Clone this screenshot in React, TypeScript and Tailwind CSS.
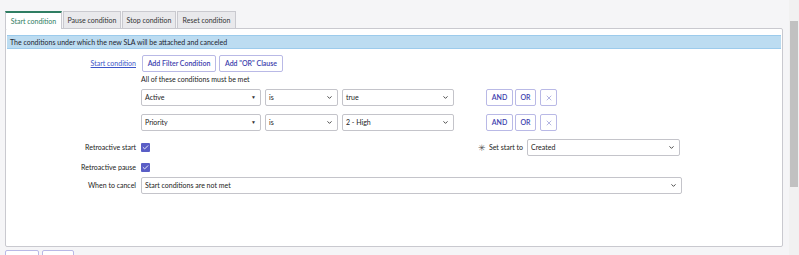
import { Check, ChevronDown, X } from "lucide-react";

const tabs = ["Start condition", "Pause condition", "Stop condition", "Reset condition"];
const tabWidths = ["w-[57px]", "w-[58px]", "w-[54px]", "w-[59px]"];

const Select = ({
  value,
  width,
  caret = false,
}: {
  value: string;
  width: string;
  caret?: boolean;
}) => (
  <div
    className={`${width} h-[17px] flex items-center justify-between border border-[#c4c4ca] rounded-[2px] bg-white pl-[3px] pr-[4px] text-[#222]`}
  >
    <span>{value}</span>
    {caret ? (
      <span className="text-[5px] leading-none text-[#333]">▼</span>
    ) : (
      <ChevronDown size={7} strokeWidth={3} color="#333" />
    )}
  </div>
);

const Btn = ({ children, width }: { children: React.ReactNode; width: string }) => (
  <div
    className={`${width} h-[17px] flex items-center justify-center border border-[#b9b9e6] rounded-[2px] bg-white text-[#3c40ad] font-semibold`}
  >
    {children}
  </div>
);

const ConditionRow = ({ field, value }: { field: string; value: string }) => (
  <div className="flex items-center ml-[134px]">
    <Select value={field} width="w-[120px]" caret />
    <div className="w-[4px]" />
    <Select value="is" width="w-[73px]" />
    <div className="w-[4px]" />
    <Select value={value} width="w-[112px]" />
    <div className="w-[32px]" />
    <Btn width="w-[27px]">AND</Btn>
    <div className="w-[2px]" />
    <Btn width="w-[21px]">OR</Btn>
    <div className="w-[4px]" />
    <div className="w-[17px] h-[17px] flex items-center justify-center border border-[#b9b9e6] rounded-[2px] bg-white">
      <X size={8} strokeWidth={1.5} color="#6a6ec4" />
    </div>
  </div>
);

const Checkbox = () => (
  <div className="w-[9px] h-[9px] bg-[#5a5ec6] rounded-[1px] flex items-center justify-center">
    <Check size={7} strokeWidth={3} color="white" />
  </div>
);

export default function App() {
  return (
    <div
      className="w-[799px] h-[255px] bg-[#f5f5f7] flex overflow-hidden text-[7px] text-[#222] whitespace-nowrap"
      style={{ fontFamily: "Lato, 'Open Sans', sans-serif" }}
    >
      <div className="flex-1 pl-[5px] pr-[6px] pt-[10px]">
        {/* Tabs */}
        <div className="flex items-end h-[18px]">
          {tabs.map((t, i) => (
            <div
              key={t}
              className={`${tabWidths[i]} flex items-center justify-center ${
                i === 0
                  ? "h-[18px] bg-white border-t-2 border-t-[#2f7d62] border-x border-x-[#c9c9cf] text-[#2f7d62] relative -mb-px"
                  : "h-[17px] bg-[#e9e9ec] border border-[#c9c9cf] border-b-0 ml-px text-[#333]"
              }`}
            >
              {t}
            </div>
          ))}
        </div>

        {/* Panel */}
        <div className="h-[219px] bg-white border border-[#c9c9cf] rounded-[2px] px-px pt-[6px]">
          <div className="h-[14px] bg-[#bcdcf1] border-y border-[#9ccbec] pl-[3px] flex items-center text-[#1d2530]">
            The conditions under which the new SLA will be attached and canceled
          </div>

          {/* Start condition row */}
          <div className="flex items-center mt-[6px] h-[17px]">
            <div className="w-[129px] flex justify-end">
              <span className="text-[#3d55c8] underline">Start condition</span>
            </div>
            <div className="w-[6px]" />
            <Btn width="w-[74px]">Add Filter Condition</Btn>
            <div className="w-[3px]" />
            <Btn width="w-[64px]">Add "OR" Clause</Btn>
          </div>

          <div className="ml-[134px] mt-[1px] h-[13px] flex items-center">
            All of these conditions must be met
          </div>

          <div className="mt-[3px]">
            <ConditionRow field="Active" value="true" />
          </div>
          <div className="mt-[8px]">
            <ConditionRow field="Priority" value="2 - High" />
          </div>

          {/* Retroactive start + Set start to */}
          <div className="flex items-center mt-[8px] h-[17px]">
            <div className="w-[129px] text-right">Retroactive start</div>
            <div className="w-[5px]" />
            <Checkbox />
            <div className="flex-1 flex justify-end items-center pr-[101px]">
              <span className="text-[#555] mr-[3px] text-[9px] leading-none">✳</span>
              <span>Set start to</span>
              <div className="w-[4px]" />
              <Select value="Created" width="w-[153px]" />
            </div>
          </div>

          <div className="flex items-center mt-[3px] h-[17px]">
            <div className="w-[129px] text-right">Retroactive pause</div>
            <div className="w-[5px]" />
            <Checkbox />
          </div>

          <div className="flex items-center mt-[1px] h-[17px]">
            <div className="w-[129px] text-right">When to cancel</div>
            <div className="w-[5px]" />
            <Select value="Start conditions are not met" width="w-[541px]" />
          </div>
        </div>

        {/* Bottom buttons, cut off */}
        <div className="flex mt-[3px]">
          <div className="w-[34px] h-[12px] bg-white border border-[#b9b9e6] rounded-[2px]" />
          <div className="w-[3px]" />
          <div className="w-[32px] h-[12px] bg-white border border-[#b9b9e6] rounded-[2px]" />
        </div>
      </div>

      {/* Scrollbar */}
      <div className="w-[10px] bg-[#f1f1f1] pt-[21px] flex justify-center">
        <div className="w-[8px] h-[166px] bg-[#c1c1c1]" />
      </div>
    </div>
  );
}
